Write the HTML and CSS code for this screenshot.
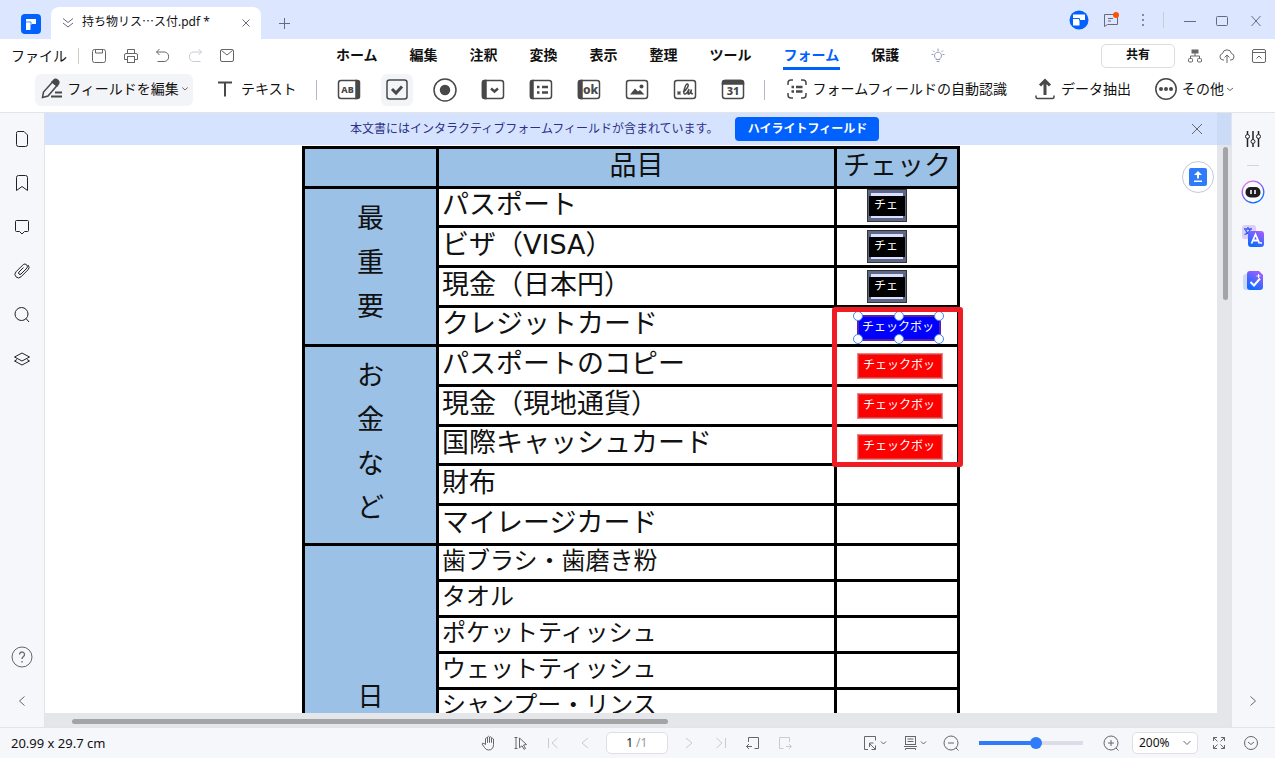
FILE: index.html
```html
<!DOCTYPE html>
<html lang="ja">
<head>
<meta charset="utf-8">
<title>持ち物リスト</title>
<link rel="stylesheet" href="styles.css">
</head>
<body>
<div class="app">
  <header class="titlebar">
    <svg class="logo" width="20" height="20" viewBox="0 0 20 20"><rect width="20" height="20" rx="4" fill="#0061ff"/><path d="M5 5h10v5h-4.500v1h-1v5h-4.500z" fill="#fff"/><path d="M5 8h5v3" stroke="#0061ff" stroke-width=".7" fill="none"/></svg>
    <div class="doc-tab">
      <svg class="ic slate" width="12" height="12" viewBox="0 0 12 12"><path d="M1 1.500l5 4 5-4M1 6l5 4 5-4"/></svg>
      <span class="doc-name">持ち物リス⋯ス付.pdf *</span>
      <button class="plain" aria-label="閉じる"><svg class="ic slate" width="8" height="8" viewBox="0 0 8 8"><path d="M.5.5l7 7M7.500.5l-7 7"/></svg></button>
    </div>
    <button class="plain new-tab" aria-label="新しいタブ"><svg class="ic slate" width="12" height="12" viewBox="0 0 12 12"><path d="M6.500 1v11M1 6.500h11"/></svg></button>
    <div class="window-tools">
      <button class="plain tool" aria-label="アカウント"><svg width="20" height="20" viewBox="0 0 20 20"><circle cx="10" cy="10" r="9.500" fill="#0061ff"/><path d="M4 4.500h12v5.500h-5.500v5.500h-6.500z" fill="#fff"/><path d="M4 8.500h6.500v2" stroke="#0061ff" fill="none"/></svg></button>
      <button class="plain tool" aria-label="メッセージ"><svg class="ic slate" width="20" height="20" viewBox="0 0 20 20"><path d="M3.500 4.500h13v10h-10l-3 2zM7 8.500h5M7 11h3"/><circle cx="15" cy="5" r="3" fill="#ff5000" stroke="none"/></svg></button>
      <button class="plain tool" aria-label="メニュー"><svg width="20" height="20" viewBox="0 0 20 20" fill="#666b82"><circle cx="10" cy="5" r="1"/><circle cx="10" cy="10" r="1"/><circle cx="10" cy="15" r="1"/></svg></button>
      <span class="divider title-divider"></span>
      <button class="plain tool" aria-label="最小化"><svg class="ic slate" width="20" height="20" viewBox="0 0 20 20"><path d="M4 11.500h12"/></svg></button>
      <button class="plain tool" aria-label="最大化"><svg class="ic slate" width="20" height="20" viewBox="0 0 20 20"><rect x="4.500" y="6.500" width="11" height="9" rx="1"/></svg></button>
      <button class="plain tool quit" aria-label="終了"><svg class="ic slate" width="20" height="20" viewBox="0 0 20 20"><path d="M5.500 6l9 10M14.500 6l-9 10"/></svg></button>
    </div>
  </header>

  <nav class="menubar">
    <button class="plain file-menu">ファイル</button>
    <span class="divider"></span>
    <div class="quick">
      <button class="plain quick-btn" aria-label="保存"><svg class="ic gray" width="16" height="16" viewBox="0 0 16 16"><rect x="1.500" y="1.500" width="13" height="13" rx="2"/><path d="M4.500 1.500v3.500h7v-3.500"/></svg></button>
      <button class="plain quick-btn" aria-label="印刷"><svg class="ic gray" width="16" height="16" viewBox="0 0 16 16"><path d="M4.500 5v-3.500h7v3.500M4 11.500h-2.500v-4.500q0-1.500 1.500-1.500h10q1.500 0 1.500 1.500v4.500h-2.500"/><rect x="4.500" y="8.500" width="7" height="6"/></svg></button>
      <button class="plain quick-btn" aria-label="元に戻す"><svg class="ic gray" width="16" height="16" viewBox="0 0 16 16"><path d="M4.500 1l-3 3 3 3M1.500 4h8a4.800 4.800 0 0 1 0 9.500h-7"/></svg></button>
      <button class="plain quick-btn" aria-label="やり直し"><svg class="ic pale" width="16" height="16" viewBox="0 0 16 16"><path d="M11.500 1l3 3-3 3M14.500 4h-8a4.800 4.800 0 0 0 0 9.500h7"/></svg></button>
      <button class="plain quick-btn" aria-label="メール"><svg class="ic gray" width="16" height="16" viewBox="0 0 16 16"><rect x="1.500" y="1.500" width="13" height="12" rx="1.500"/><path d="M2.500 2.500l5.500 4.500 5.500-4.500"/></svg></button>
    </div>
    <div class="tabs">
      <a href="#">ホーム</a><a href="#">編集</a><a href="#">注釈</a><a href="#">変換</a><a href="#">表示</a><a href="#">整理</a><a href="#">ツール</a><a href="#" class="current">フォーム</a><a href="#">保護</a>
      <button class="plain" aria-label="ヒント"><svg class="ic violet" width="14" height="16" viewBox="0 0 14 16"><path d="M7 .5v2.500M2 2.500l1.500 1.500M12 2.500l-1.500 1.500M.5 6.500h2M11.500 6.500h2M5 11.500v-1a3.500 3.500 0 1 1 4 0v1zM5.500 13.500h3"/></svg></button>
    </div>
    <div class="menu-right">
      <button class="share">共有</button>
      <button class="plain quick-btn" aria-label="構成"><svg class="ic gray" width="16" height="16" viewBox="0 0 16 16"><rect x="5" y="2" width="6" height="3" fill="#666"/><path d="M8 5v3M3.500 10.500v-2.500h9v2.500"/><rect x="1.500" y="10.500" width="4" height="3.500" rx="1"/><rect x="10.500" y="10.500" width="4" height="3.500" rx="1"/></svg></button>
      <button class="plain quick-btn" aria-label="アップロード"><svg class="ic gray" width="16" height="16" viewBox="0 0 16 16"><path d="M5 12h-1a3.300 3.300 0 0 1-.5-6.500 4.600 4.600 0 0 1 9 0 3.300 3.300 0 0 1-.5 6.500h-1M8 15v-8M5.500 9.500l2.500-2.500 2.500 2.500"/></svg></button>
      <button class="plain quick-btn" aria-label="折りたたむ"><svg class="ic gray" width="16" height="16" viewBox="0 0 16 16"><rect x="1.500" y="1.500" width="13" height="13" rx="1.500"/><path d="M1.500 4.500h13M5.500 10.500l2.500-2.500 2.500 2.500"/></svg></button>
    </div>
  </nav>

  <div class="toolbar">
    <button class="plain labelled edit-field">
      <svg class="ic dark" width="24" height="24" viewBox="0 0 24 24"><path d="M2.500 20.500l1-5.500 9-10 4.500 3.500-9 10.500z" stroke-width="1.500"/><path d="M13 4q2-3 4.500-1t.5 4.500l-1 1.500-5-4z" fill="#484848"/><path d="M15 15.500h7M11 19.500h11" stroke-width="2"/></svg>
      フィールドを編集<svg class="ic gray" width="6" height="4" viewBox="0 0 6 4"><path d="M.3.500l2.700 2.500 2.700-2.500"/></svg>
    </button>
    <button class="plain labelled text-btn"><svg class="ic dark" width="16" height="16" viewBox="0 0 16 16"><path d="M1 1.500h14M8 1.500v14" stroke-width="2"/></svg>テキスト</button>
    <span class="divider cool"></span>
    <div class="fields">
      <button class="plain field-btn" aria-label="テキストフィールド"><svg class="ic dark" width="24" height="24" viewBox="0 0 24 24"><rect x="1.500" y="2.500" width="20" height="18" rx="2.500"/><path d="M19 2.500v18h1.500q2 0 2-2v-14q0-2-2-2z" fill="#484848"/><text x="10.500" y="15" class="glyph" font-size="9">AB</text></svg></button>
      <button class="plain field-btn active" aria-label="チェックボックス"><svg class="ic dark" width="24" height="24" viewBox="0 0 24 24"><rect x="2" y="2" width="20" height="19" rx="2.500"/><path d="M7 11l4 4 6-6.500" stroke-width="3"/></svg></button>
      <button class="plain field-btn" aria-label="ラジオボタン"><svg class="ic dark" width="24" height="24" viewBox="0 0 24 24"><circle cx="12" cy="12" r="11"/><circle cx="12" cy="12" r="4.500" fill="#484848"/></svg></button>
      <button class="plain field-btn" aria-label="ドロップダウン"><svg class="ic dark" width="24" height="24" viewBox="0 0 24 24"><rect x="1.500" y="2.500" width="21" height="18" rx="2.500"/><path d="M5 2.500v18h-1.500q-2 0-2-2v-14q0-2 2-2z" fill="#484848"/><path d="M10 10.500l3.500 3 3.500-3" stroke-width="2.500"/></svg></button>
      <button class="plain field-btn" aria-label="リストボックス"><svg class="ic dark" width="24" height="24" viewBox="0 0 24 24"><rect x="1.500" y="2.500" width="21" height="18" rx="2.500"/><path d="M4 2.500v18h-1q-1.500 0-1.500-2v-14q0-2 1.500-2z" fill="#484848"/><path d="M8 9h2.500M13 9h6M8 14.500h2.500M13 14.500h6" stroke-width="2.500"/></svg></button>
      <button class="plain field-btn" aria-label="ボタン"><svg class="ic dark" width="24" height="24" viewBox="0 0 24 24"><rect x="1.500" y="2.500" width="21" height="18" rx="2.500"/><path d="M5 2.500v18h-1.500q-2 0-2-2v-14q0-2 2-2z" fill="#484848"/><text x="13.500" y="16" class="glyph" font-size="12">ok</text></svg></button>
      <button class="plain field-btn" aria-label="画像"><svg class="ic dark" width="24" height="24" viewBox="0 0 24 24"><rect x="1.500" y="2.500" width="21" height="18" rx="2.500"/><path d="M5 16.500l5-6 3 3 2-1.500 4.500 4.500z" fill="#484848" stroke="none"/><circle cx="16.500" cy="8.500" r="2" fill="#484848" stroke="none"/></svg></button>
      <button class="plain field-btn" aria-label="署名"><svg class="ic dark" width="24" height="24" viewBox="0 0 24 24"><rect x="1.500" y="2.500" width="21" height="18" rx="2.500"/><path d="M4.500 13.500l3 3M7.500 13.500l-3 3M10 14c4-2 6.500-7.500 4.500-8-2-.5-5 9.500-3 10 2 .3 3.500-2.500 4.500-5l-1 4.500q.5 1.500 2-.5l1.500-3.500q-1.500 5 1.500 4" stroke-width="1.500"/></svg></button>
      <button class="plain field-btn" aria-label="日付"><svg class="ic dark" width="24" height="24" viewBox="0 0 24 24"><rect x="1.500" y="2.500" width="21" height="18" rx="2.500"/><path d="M1.500 6v-1q0-2.500 2.500-2.500h16q2.500 0 2.500 2.500v1z" fill="#484848"/><text x="12" y="17" class="glyph" font-size="11">31</text></svg></button>
    </div>
    <span class="divider cool"></span>
    <button class="plain labelled detect"><svg class="ic dark" width="20" height="20" viewBox="0 0 20 20"><path d="M6 1h-2q-3 0-3 3v2M14 1h2q3 0 3 3v2M6 19h-2q-3 0-3-3v-2M14 19h2q3 0 3-3v-2"/><path d="M4.500 8h2.500M9 8h6.500M4.500 12.500h2.500M9 12.500h6.500" stroke-width="2.500"/></svg>フォームフィールドの自動認識</button>
    <button class="plain labelled extract"><svg class="ic dark" width="20" height="22" viewBox="0 0 20 22"><path d="M1 17.500v1.500q0 1.500 1.500 1.500h15q1.500 0 1.500-1.500v-1.500" stroke-width="1.500"/><path d="M10 17v-13M5 7.500l5-5 5 5" stroke-width="3"/></svg>データ抽出</button>
    <button class="plain labelled more"><svg class="ic dark" width="22" height="22" viewBox="0 0 22 22"><circle cx="11" cy="11" r="10.200"/><g fill="#484848" stroke="none"><circle cx="6" cy="11" r="2"/><circle cx="11" cy="11" r="2"/><circle cx="16" cy="11" r="2"/></g></svg>その他<svg class="ic gray chev" width="8" height="5" viewBox="0 0 8 5"><path d="M1 1l3 2.500 3-2.500"/></svg></button>
  </div>

  <div class="workspace">
    <aside class="side left">
      <button class="plain side-btn" aria-label="ページ"><svg class="ic ink" width="16" height="16" viewBox="0 0 16 16"><path d="M3.500.5h6.500l3.500 3.500v9.500q0 2-2 2h-7q-2 0-2-2v-11q0-2 1-2z"/></svg></button>
      <button class="plain side-btn" aria-label="しおり"><svg class="ic ink" width="16" height="16" viewBox="0 0 16 16"><path d="M2.500 15.500v-13q0-2 2-2h7q2 0 2 2v13l-5.500-4z"/></svg></button>
      <button class="plain side-btn" aria-label="コメント"><svg class="ic ink" width="16" height="16" viewBox="0 0 16 16"><path d="M2.500 1.500h11q1 0 1 1v9q0 1-1 1h-3l-2.500 2.500-2.500-2.500h-3q-1 0-1-1v-9q0-1 1-1z"/></svg></button>
      <button class="plain side-btn" aria-label="添付"><svg class="ic ink" width="16" height="16" viewBox="0 0 16 16"><path d="M9.500 4.500l-4.500 4.500a1.300 1.300 0 0 0 2 2l6-6a2.600 2.600 0 0 0-3.700-3.500l-7.300 7.300a3.500 3.500 0 0 0 5 5l7-7a3.400 3.400 0 0 0 0-4.800"/></svg></button>
      <button class="plain side-btn" aria-label="検索"><svg class="ic ink" width="16" height="16" viewBox="0 0 16 16"><circle cx="7.500" cy="7" r="6.500"/><path d="M12 11.500l3 3.500"/></svg></button>
      <button class="plain side-btn" aria-label="レイヤー"><svg class="ic ink" width="16" height="16" viewBox="0 0 16 16"><path d="M8 2l7.500 4-7.500 4-7.500-4zM3 8.500l-2.500 1.500 7.500 4 7.500-4-2.500-1.500"/></svg></button>
      <button class="plain side-btn push" aria-label="ヘルプ"><svg class="ic gray" width="22" height="22" viewBox="0 0 22 22"><circle cx="11" cy="11" r="10"/><path d="M8.500 8.500a2.500 2.500 0 1 1 4 2q-1.500 1-1.500 2.500M11 15v1.500" stroke-width="1.300"/></svg></button>
      <button class="plain side-btn" aria-label="たたむ"><svg class="ic gray" width="10" height="10" viewBox="0 0 10 10"><path d="M7.500.5l-5 4.500 5 4.500"/></svg></button>
    </aside>

    <main class="viewer">
      <div class="notice">
        <span>本文書にはインタラクティブフォームフィールドが含まれています。</span>
        <button class="highlight">ハイライトフィールド</button>
        <button class="plain notice-close" aria-label="閉じる"><svg class="ic gray" width="12" height="12" viewBox="0 0 12 12"><path d="M1 1l10 10M11 1l-10 10"/></svg></button>
      </div>
      <div class="pane">
        <div class="page">
          <div class="sheet">
            <table class="list">
              <colgroup><col class="c-group"><col class="c-item"><col class="c-check"></colgroup>
              <tr class="head"><th></th><th>品目</th><th>チェック</th></tr>
              <tr><th rowspan="4" class="group"><span>最</span><span>重</span><span>要</span></th><td>パスポート</td><td class="slot upper"><button class="field dark-field"><span>チェ</span></button></td></tr>
              <tr class="tall"><td>ビザ（VISA）</td><td class="slot"><button class="field dark-field"><span>チェ</span></button></td></tr>
              <tr class="tall"><td>現金（日本円）</td><td class="slot"><button class="field dark-field"><span>チェ</span></button></td></tr>
              <tr><td>クレジットカード</td><td class="slot lower"><button class="field blue-field">チェックボッ<i class="grip tl"></i><i class="grip tc"></i><i class="grip tr"></i><i class="grip bl"></i><i class="grip bc"></i><i class="grip br"></i></button></td></tr>
              <tr class="tall"><th rowspan="5" class="group"><span>お</span><span>金</span><span>な</span><span>ど</span></th><td>パスポートのコピー</td><td class="slot"><button class="field red-field">チェックボッ</button></td></tr>
              <tr class="tall"><td>現金（現地通貨）</td><td class="slot"><button class="field red-field">チェックボッ</button></td></tr>
              <tr><td>国際キャッシュカード</td><td class="slot lower"><button class="field red-field">チェックボッ</button></td></tr>
              <tr class="tall"><td>財布</td><td></td></tr>
              <tr class="tall"><td>マイレージカード</td><td></td></tr>
              <tr class="low"><th rowspan="5" class="group day"><span>日</span></th><td>歯ブラシ・歯磨き粉</td><td></td></tr>
              <tr class="low"><td>タオル</td><td></td></tr>
              <tr class="low"><td>ポケットティッシュ</td><td></td></tr>
              <tr class="low"><td>ウェットティッシュ</td><td></td></tr>
              <tr class="low"><td>シャンプー・リンス</td><td></td></tr>
            </table>
            <div class="marker"></div>
          </div>
          <button class="export" aria-label="アップロード"><svg width="18" height="18" viewBox="0 0 18 18"><rect width="18" height="18" rx="2" fill="#2f7bfa"/><path d="M9 3l4 4h-3v3.500h-2v-3.500h-3zM5 12.500h8v1.500h-8z" fill="#fff"/></svg></button>
        </div>
        <div class="vtrack"><div class="vthumb"></div></div>
      </div>
      <div class="htrack"><div class="hthumb"></div></div>
    </main>

    <aside class="side right">
      <button class="plain side-btn" aria-label="設定"><svg class="ic ink" width="16" height="16" viewBox="0 0 16 16"><path d="M2.500 0v3.500M2.500 7.500v8.500M8 0v8.500M8 12.500v3.500M13.500 0v3.500M13.500 7.500v8.500" stroke-width="1.500"/><circle cx="2.500" cy="5.500" r="2"/><circle cx="8" cy="10.500" r="2"/><circle cx="13.500" cy="5.500" r="2"/></svg></button>
      <span class="side-rule"></span>
      <button class="plain side-btn" aria-label="AI"><svg width="24" height="24" viewBox="0 0 24 24"><defs><linearGradient id="ring" x1="0" y1="0" x2=".6" y2="1"><stop offset="0" stop-color="#ff7de9"/><stop offset=".5" stop-color="#8b5cff"/><stop offset="1" stop-color="#0070ff"/></linearGradient></defs><circle cx="12" cy="12" r="10.800" fill="#fff" stroke="url(#ring)" stroke-width="1.300"/><rect x="4.500" y="7" width="15" height="10.500" rx="5" fill="#1d1d22"/><path d="M10 10v4M14 10v4" stroke="#fff" stroke-width="1.600"/></svg></button>
      <button class="plain side-btn" aria-label="翻訳"><svg width="24" height="24" viewBox="0 0 24 24"><defs><linearGradient id="blue" x1="1" y1="0" x2=".5" y2="1"><stop offset="0" stop-color="#b35cff"/><stop offset="1" stop-color="#126bff"/></linearGradient></defs><rect x="1" y="1" width="14" height="14" rx="3" fill="#d9cffa"/><path d="M3 5h8M7 3v2M9.500 5q-1.500 4-6 5.500M4.500 6q1 3 4 4" stroke="#315cf0" stroke-width="1.300" fill="none"/><rect x="7" y="7" width="16" height="16" rx="3" fill="url(#blue)"/><path d="M10.500 19.500l4-9 4 9M12 16.500h5" stroke="#fff" stroke-width="1.800" fill="none"/><circle cx="20" cy="19" r="1" fill="#fff"/></svg></button>
      <button class="plain side-btn" aria-label="チェック"><svg width="24" height="24" viewBox="0 0 24 24"><rect x="2" y="6" width="12" height="16" rx="3" fill="#cfd6fb"/><path d="M9 3h9l4 4v12q0 3-3 3h-10q-3 0-3-3v-13q0-3 3-3z" fill="url(#blue)"/><path d="M9.500 14l3.500 3.500 6-7" stroke="#fff" stroke-width="2" fill="none"/><path d="M17.500 6v4M15.500 8h4" stroke="#fff"/></svg></button>
      <button class="plain side-btn push" aria-label="開く"><svg class="ic gray" width="10" height="10" viewBox="0 0 10 10"><path d="M2.500.5l5 4.500-5 4.500"/></svg></button>
    </aside>
  </div>

  <footer class="status">
    <span class="dims">20.99 x 29.7 cm</span>
    <div class="pager">
      <button class="plain quick-btn" aria-label="手のひら"><svg class="ic gray" width="16" height="16" viewBox="0 0 16 16"><path d="M4.500 9.500v-6q1-1.500 2 0v4-5.500q1-1.500 2 0v5.500-5q1-1.500 2 0v5-3.500q1-1.500 2 0v5.500q0 5.500-5 5.500-2.500 0-4-2.500l-2.500-3.500q.5-1.500 2-.5z"/></svg></button>
      <button class="plain quick-btn" aria-label="選択"><svg class="ic gray" width="16" height="16" viewBox="0 0 16 16"><path d="M1.500 2.500h3M3 2.500v11M1.500 13.500h3M6.500 3l7 6.500-3 .5 2 3.500-1.500.8-2-3.500-2.500 2z"/></svg></button>
      <button class="plain quick-btn" aria-label="最初"><svg class="ic pale" width="16" height="16" viewBox="0 0 16 16"><path d="M3.500 3v10M12.500 3l-5.500 5 5.500 5"/></svg></button>
      <button class="plain quick-btn" aria-label="前へ"><svg class="ic pale" width="16" height="16" viewBox="0 0 16 16"><path d="M11 3l-6 5 6 5"/></svg></button>
      <label class="page-box"><input type="text" value="1" aria-label="ページ番号"><span>/1</span></label>
      <button class="plain quick-btn" aria-label="次へ"><svg class="ic pale" width="16" height="16" viewBox="0 0 16 16"><path d="M5 3l6 5-6 5"/></svg></button>
      <button class="plain quick-btn" aria-label="最後"><svg class="ic pale" width="16" height="16" viewBox="0 0 16 16"><path d="M12.500 3v10M3.500 3l5.500 5-5.500 5"/></svg></button>
      <button class="plain quick-btn" aria-label="前の表示"><svg class="ic gray" width="16" height="16" viewBox="0 0 16 16"><path d="M3.500 7v-4.500h10v11h-4M7 11.500h-5.500M4 9l-2.500 2.500 2.500 2.500"/></svg></button>
      <button class="plain quick-btn" aria-label="次の表示"><svg class="ic pale" width="16" height="16" viewBox="0 0 16 16"><path d="M12.500 7v-4.500h-10v11h4M9 11.500h5.500M12 9l2.500 2.500-2.500 2.500"/></svg></button>
    </div>
    <div class="zoom">
      <button class="plain fit" aria-label="ページに合わせる"><svg class="ic gray" width="24" height="16" viewBox="0 0 24 16"><path d="M5 14.500h-3.500v-13h11v4M6 8l6 6M6.500 12v-4h4M12.500 10.500v4h-4M18 6.500l2.500 2.500 2.500-2.500"/></svg></button>
      <button class="plain fit" aria-label="表示モード"><svg class="ic gray" width="24" height="16" viewBox="0 0 24 16"><rect x="2.500" y="1.500" width="10" height="8"/><path d="M4.500 4h6M4.500 6.500h6M1 11.500h13M2.500 15v-1.500h10v1.500M18 6.500l2.500 2.500 2.500-2.500"/></svg></button>
      <button class="plain quick-btn" aria-label="縮小"><svg class="ic gray" width="16" height="16" viewBox="0 0 16 16"><circle cx="8" cy="8" r="7"/><path d="M5 8h6M13 13l2.500 2.500"/></svg></button>
      <input type="range" min="0" max="100" value="55" aria-label="倍率">
      <button class="plain quick-btn" aria-label="拡大"><svg class="ic gray" width="16" height="16" viewBox="0 0 16 16"><circle cx="8" cy="8" r="7"/><path d="M5 8h6M8 5v6M13 13l2.500 2.500"/></svg></button>
      <div class="select-box"><select aria-label="ズーム"><option>200%</option></select><svg class="ic gray" width="8" height="6" viewBox="0 0 8 6"><path d="M.5 1l3.500 3.500 3.500-3.500"/></svg></div>
      <button class="plain quick-btn" aria-label="全画面"><svg class="ic gray" width="12" height="12" viewBox="0 0 12 12"><path d="M.5 4v-3.500h3.500M.5.5l4 4M8 .5h3.500v3.500M11.500.5l-4 4M.5 8v3.500h3.500M.5 11.500l4-4M8 11.500h3.500v-3.500M11.500 11.500l-4-4"/></svg></button>
      <button class="plain quick-btn" aria-label="詳細"><svg class="ic gray" width="14" height="14" viewBox="0 0 14 14"><circle cx="7" cy="7" r="6.500"/><path d="M4 6l3 2.500 3-2.500"/></svg></button>
    </div>
  </footer>
</div>
</body>
</html>
```

FILE: styles.css
```css
* { box-sizing: border-box; }

body {
  margin: 0;
  background: #fff;
  color: #111;
  font: 14px/20px "Noto Sans", "Noto Sans CJK JP", sans-serif;
}

button, input, select { font: inherit; color: inherit; }

.plain {
  display: flex;
  align-items: center;
  justify-content: center;
  padding: 0;
  border: 0;
  background: none;
}

.ic { fill: none; stroke-width: 1; flex: none; }
.slate { stroke: #666b82; }
.gray { stroke: #666; }
.pale { stroke: #c9cad2; }
.violet { stroke: #9298b8; }
.ink { stroke: #222; }
.dark { stroke: #484848; stroke-width: 1.500; }
.glyph {
  fill: #484848;
  stroke: none;
  font-family: "Noto Sans", sans-serif;
  font-weight: 800;
  text-anchor: middle;
}

.app {
  display: flex;
  flex-direction: column;
  height: 100vh;
  overflow: hidden;
}

.divider { width: 1px; height: 16px; background: #ccc; }
.cool { height: 20px; background: #b4b8cc; }

/* Title bar */
.titlebar {
  display: flex;
  align-items: flex-end;
  height: 39px;
  flex: none;
  padding-left: 21px;
  background: #dde6ff;
}
.logo { margin: 0 10px 5px 0; }
.doc-tab {
  display: flex;
  align-items: center;
  width: 210px;
  height: 32px;
  padding: 0 11px;
  border-radius: 8px 8px 0 0;
  background: #fff;
  font-size: 12px;
}
.doc-name { flex: 1; margin: 0 8px; padding-bottom: 2px; white-space: nowrap; }
.new-tab { margin: 0 0 10px 17px; }
.window-tools {
  display: flex;
  align-items: center;
  gap: 12px;
  margin: 0 9px 9px auto;
}
.tool { width: 20px; height: 20px; }
.title-divider { margin: 0 4px 0 -2px; }
.quit { margin-left: 2px; }

/* Menu bar */
.menubar {
  display: flex;
  align-items: center;
  height: 34px;
  flex: none;
  padding-left: 11px;
}
.file-menu { margin-right: 11px; }
.quick { display: flex; gap: 16px; margin-left: 12px; }
.quick-btn { width: 16px; height: 16px; }
.tabs { display: flex; align-items: center; gap: 32px; margin-left: 101px; }
.tabs a {
  padding: 4px 0 3px;
  border-bottom: 3px solid transparent;
  color: #111;
  font-weight: 700;
  line-height: 18px;
  text-decoration: none;
}
.tabs a.current {
  margin: 0 -1px;
  padding: 4px 1px 3px;
  border-color: #0061ff;
  color: #0061ff;
}
.menu-right {
  display: flex;
  align-items: center;
  gap: 16px;
  margin: 0 8px 0 auto;
}
.share {
  width: 74px;
  height: 24px;
  margin-right: -4px;
  padding: 0 0 2px;
  border: 1px solid #ddd;
  border-radius: 5px;
  background: #fff;
  font-size: 12px;
  font-weight: 700;
}

/* Form toolbar */
.toolbar {
  display: flex;
  align-items: center;
  height: 40px;
  flex: none;
  padding: 0 0 6px 35px;
  border-bottom: 1px solid #e4e4e8;
  white-space: nowrap;
}
.labelled { gap: 5px; height: 32px; padding-bottom: 1px; }
.edit-field { width: 158px; gap: 3px; border-radius: 6px; background: #f3f4f8; }
.text-btn { gap: 8px; margin: 0 19px 0 24px; }
.fields { display: flex; gap: 16px; margin: 0 15px 0 16px; }
.field-btn { width: 32px; height: 32px; border-radius: 6px; }
.field-btn.active { background: #f3f4f8; }
.detect { margin-left: 22px; gap: 6px; }
.extract { margin-left: 28px; gap: 6px; }
.more { margin-left: 24px; }
.chev { margin-left: -3px; }

/* Workspace */
.workspace { display: flex; flex: 1; min-height: 0; }
.side {
  display: flex;
  flex-direction: column;
  align-items: center;
  width: 45px;
  flex: none;
  padding: 4px 0;
  background: #f6f7fb;
}
.left { border-right: 1px solid #e3e4e9; }
.right { width: 44px; padding-right: 1px; border-left: 1px solid #e3e4e9; }
.side-btn { width: 42px; height: 44px; flex: none; }
.push { margin-top: auto; }
.side-rule { width: 12px; height: 1px; margin: 4px 0; background: #d4d5da; }

.viewer { display: flex; flex-direction: column; flex: 1; min-width: 0; }
.notice {
  display: flex;
  align-items: center;
  height: 32px;
  flex: none;
  padding-left: 305px;
  border-right: 14px solid #cbdaf7;
  background: #d5e3ff;
  color: #2c2f86;
  font-size: 12px;
  white-space: nowrap;
}
.highlight {
  width: 144px;
  height: 24px;
  margin-left: 17px;
  padding: 0 0 1px;
  border: 0;
  border-radius: 4px;
  background: #0061ff;
  color: #fff;
  font-weight: 700;
}
.notice-close { margin: 0 14px 0 auto; }

.pane { display: flex; flex: 1; min-height: 0; }
.page { position: relative; flex: 1; overflow: hidden; background: #fff; }
.sheet { position: relative; width: 658px; margin: 1px auto 0 257px; }

.list {
  width: 100%;
  border-spacing: 3px;
  background: #000;
  color: #111;
  font: 27px/30px "DejaVu Sans", "Noto Sans CJK JP", sans-serif;
  table-layout: fixed;
}
.c-group { width: 131px; }
.c-item { width: 395px; }
.c-check { width: 120px; }
.list td, .list th {
  height: 36px;
  padding: 0 0 4px 3px;
  background: #fff;
  font-weight: 400;
  text-align: left;
  white-space: nowrap;
}
.list .tall td { height: 37px; }
.list .head th { height: 37px; padding: 0 0 3px; text-align: center; }
.list th { background: #9cc1e6; }
.list .group { padding: 0 0 7px; }
.group span { display: block; height: 44px; line-height: 44px; text-align: center; }
.list .low td { height: 33px; padding-bottom: 3px; font-size: 24px; }
.list .day { padding: 129px 0 0; vertical-align: top; font-size: 26px; }
.list .slot { padding: 0 0 0 20px; }
.list .upper { vertical-align: top; }
.list .lower { padding-bottom: 3px; vertical-align: bottom; }

/* Form fields placed on the page */
.field {
  display: block;
  position: relative;
  width: 86px;
  height: 26px;
  padding: 0 2px 4px 0;
  color: #fff;
  font: 12px/18px "Noto Sans CJK JP", sans-serif;
}
.dark-field {
  width: 40px;
  height: 33px;
  margin-left: 10px;
  padding: 0 1px;
  border: 1px solid #333;
  background: #d9dfff;
  box-shadow: inset 0 0 0 3px #5f6787;
}
.dark-field span {
  display: block;
  height: 20px;
  padding-right: 2px;
  background: #000;
  line-height: 16px;
}
.blue-field {
  width: 84px;
  border: 2px solid #5b20a8;
  background: #00f;
}
.red-field {
  border: 1px solid #ff7b7b;
  outline: 1px solid #c44;
  outline-offset: -2px;
  background: #f00;
}
.grip {
  position: absolute;
  width: 10px;
  height: 10px;
  border: 1px solid #3f86f5;
  border-radius: 50%;
  background: #fff;
}
.tl, .tc, .tr { top: -6px; }
.bl, .bc, .br { bottom: -5px; }
.tl, .bl { left: -6px; }
.tc, .bc { left: 35px; }
.tr, .br { right: -5px; }

.marker {
  position: absolute;
  top: 161px;
  right: -3px;
  width: 131px;
  height: 160px;
  border: 5px solid #ef1c24;
  border-radius: 3px;
}
.export {
  position: absolute;
  top: 16px;
  right: 3px;
  display: flex;
  align-items: center;
  justify-content: center;
  width: 32px;
  height: 32px;
  padding: 0;
  border: 1px solid #c4c8dd;
  border-radius: 50%;
  background: #fff;
}

.vtrack { width: 14px; flex: none; padding: 2px 4px 0 6px; background: #e5e6ea; }
.vthumb { width: 5px; height: 153px; margin-left: auto; border-radius: 3px; background: #a3a4a6; }
.htrack { height: 14px; flex: none; padding: 6px 0 0 27px; background: #e5e6ea; }
.hthumb { width: 596px; height: 5px; border-radius: 3px; background: #a3a4a6; }

/* Status bar */
.status {
  display: flex;
  align-items: center;
  height: 31px;
  flex: none;
  padding: 0 16px 0 11px;
  border-top: 1px solid #e3e4e9;
  background: #f6f7fb;
  font-size: 13px;
}
.pager { display: flex; align-items: center; gap: 16px; margin-left: auto; }
.page-box {
  display: flex;
  align-items: center;
  width: 62px;
  height: 22px;
  margin: 0 -3px;
  border: 1px solid #e0e0e4;
  border-radius: 5px;
  background: #fff;
  font-size: 12px;
}
.page-box input {
  width: 26px;
  padding: 0;
  border: 0;
  background: none;
  text-align: right;
}
.page-box span { margin-left: 3px; color: #999; }
.zoom { display: flex; align-items: center; gap: 16px; margin-left: 70px; }
.fit { width: 24px; height: 16px; }
.zoom input {
  width: 104px;
  height: 12px;
  margin: 0 4px;
  appearance: none;
  background: linear-gradient(90deg, #2f7bfa 56%, #dcdde9 56%) center / 100% 4px no-repeat;
}
.zoom input::-webkit-slider-thumb {
  appearance: none;
  width: 12px;
  height: 12px;
  border-radius: 50%;
  background: #2f7bfa;
}
.select-box {
  display: flex;
  align-items: center;
  width: 66px;
  height: 22px;
  margin: 0 -3px;
  padding: 0 6px;
  border: 1px solid #e0e0e4;
  border-radius: 5px;
  background: #fff;
  font-size: 12px;
}
.select-box select {
  flex: 1;
  min-width: 0;
  padding: 0;
  border: 0;
  appearance: none;
  background: none;
}
```
